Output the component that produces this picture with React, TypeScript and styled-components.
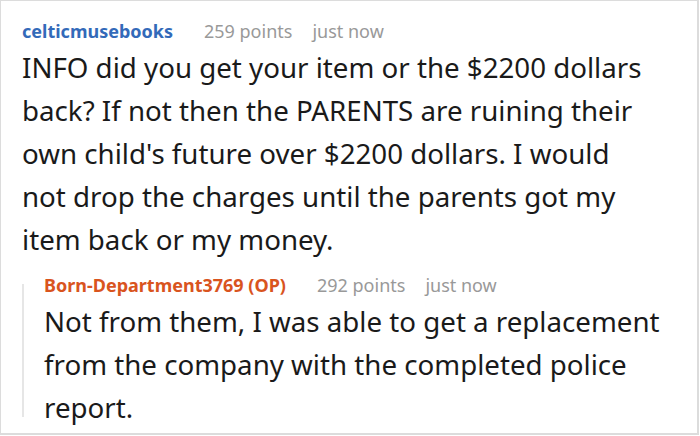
import * as React from 'react'
import styled, { createGlobalStyle } from 'styled-components'

const GlobalStyle = createGlobalStyle`
  html, body {
    margin: 0;
    padding: 0;
    background: #ffffff;
  }
`

const Frame = styled.div`
  box-sizing: border-box;
  width: 699px;
  height: 435px;
  border: 1px solid #dcdcdc;
  border-right-width: 2px;
  border-bottom-width: 2px;
  background: #ffffff;
  padding: 15px 20px 0 21px;
  overflow: hidden;
  font-family: 'Noto Sans', 'Open Sans', sans-serif;
`

const Comment = styled.div`
  display: flex;
  flex-direction: column;
`

const Header = styled.div`
  display: flex;
  align-items: baseline;
  gap: 20px;
  font-size: 18px;
  line-height: 30px;
`

const Author = styled.span<{ $color: string }>`
  font-weight: 700;
  color: ${(p) => p.$color};
  margin-right: 11px;
`

const Meta = styled.span`
  color: #999999;
`

const Body = styled.div`
  max-width: 630px;
  font-size: 27.7px;
  line-height: 43px;
  color: #1a1a1a;
`

const Replies = styled.div`
  position: relative;
  margin-top: 9px;
  padding-left: 22px;

  &::before {
    content: '';
    position: absolute;
    left: 0;
    top: 14px;
    bottom: 12px;
    width: 2px;
    background: #e6e6e6;
  }
`

interface ICommentProps {
  author: string
  color: string
  points: number
  time: string
  text: string
  children?: React.ReactNode
}

const CommentItem: React.FC<ICommentProps> = ({ author, color, points, time, text, children }) => (
  <Comment>
    <Header>
      <Author $color={color}>{author}</Author>
      <Meta>{points} points</Meta>
      <Meta>{time}</Meta>
    </Header>
    <Body>{text}</Body>
    {children}
  </Comment>
)

const App: React.FC = () => (
  <>
    <GlobalStyle />
    <Frame>
      <CommentItem
        author="celticmusebooks"
        color="#336ab9"
        points={259}
        time="just now"
        text="INFO did you get your item or the $2200 dollars back? If not then the PARENTS are ruining their own child's future over $2200 dollars. I would not drop the charges until the parents got my item back or my money."
      >
        <Replies>
          <CommentItem
            author="Born-Department3769 (OP)"
            color="#d9541e"
            points={292}
            time="just now"
            text="Not from them, I was able to get a replacement from the company with the completed police report."
          />
        </Replies>
      </CommentItem>
    </Frame>
  </>
)

export default App
